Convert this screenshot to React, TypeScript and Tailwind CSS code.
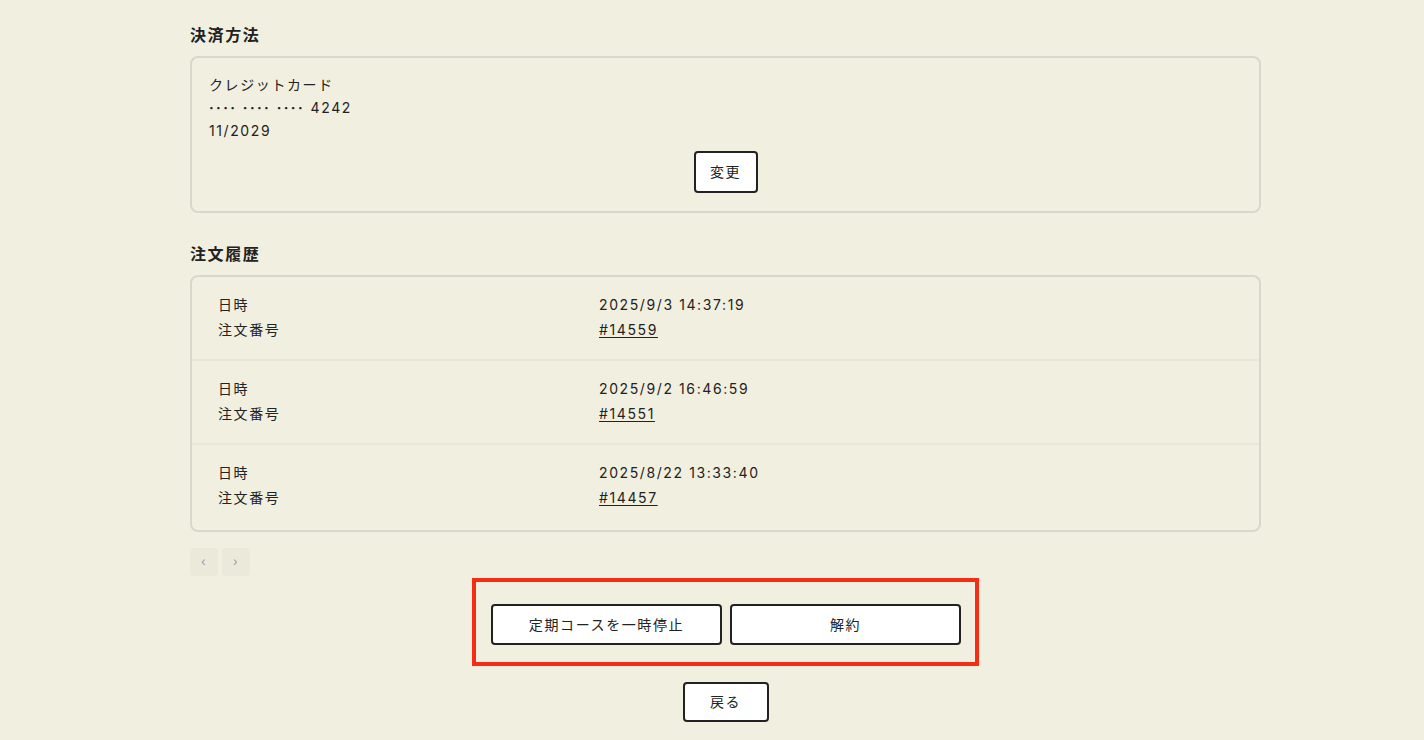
import React from "react";

const orders = [
  { date: "2025/9/3 14:37:19", no: "#14559" },
  { date: "2025/9/2 16:46:59", no: "#14551" },
  { date: "2025/8/22 13:33:40", no: "#14457" },
];

export default function App() {
  return (
    <div
      className="min-h-[740px] w-full bg-[#f1efdf] text-[#222] tracking-[0.1em]"
      style={{ fontFamily: '"Inter", "Noto Sans CJK JP", sans-serif' }}
    >
      <div className="ml-[190px] w-[1071px] pt-[23px] pb-6">
        <h2 className="text-base font-bold leading-6 mb-[9px]">決済方法</h2>
        <div className="rounded-lg border-2 border-[#d9d7cb] px-[17px] pt-[15px] pb-[18px] text-sm leading-[23px]">
          <div>クレジットカード</div>
          <div>
            <span className="tracking-[2.4px] font-bold">····</span>{" "}
            <span className="tracking-[2.4px] font-bold">····</span>{" "}
            <span className="tracking-[2.4px] font-bold">····</span> 4242
          </div>
          <div>11/2029</div>
          <div className="flex justify-center mt-[9px]">
            <button className="h-[42px] w-[64px] rounded border-2 border-[#222] bg-white text-sm">
              変更
            </button>
          </div>
        </div>

        <h2 className="text-base font-bold leading-6 mt-[29px] mb-[9px]">注文履歴</h2>
        <div className="rounded-lg border-2 border-[#d9d7cb] text-sm">
          {orders.map((o, i) => (
            <div
              key={o.no}
              className={`px-[26px] pt-[16px] grid grid-cols-[381px_1fr] content-start gap-y-px leading-[24px] ${
                i < orders.length - 1 ? "h-[84px] border-b-2 border-[#e9e7d8]" : "h-[85px]"
              }`}
            >
              <div>日時</div>
              <div>{o.date}</div>
              <div>注文番号</div>
              <div>
                <span className="underline underline-offset-2">{o.no}</span>
              </div>
            </div>
          ))}
        </div>

        <div className="mt-[16px] flex gap-1">
          <button className="h-7 w-7 rounded bg-[#ebe9d9] text-[#999] text-xs flex items-center justify-center">
            ‹
          </button>
          <button className="h-7 w-7 rounded bg-[#ebe9d9] text-[#999] text-xs flex items-center justify-center">
            ›
          </button>
        </div>

        <div className="flex justify-center mt-[2px]">
          <div className="border-4 border-[#f42d14] pl-[15px] pr-[14px] pt-[22px] pb-[17px] flex gap-2">
            <button className="h-[41px] w-[231px] rounded border-2 border-[#222] bg-white text-sm">
              定期コースを一時停止
            </button>
            <button className="h-[41px] w-[231px] rounded border-2 border-[#222] bg-white text-sm">
              解約
            </button>
          </div>
        </div>

        <div className="flex justify-center mt-4">
          <button className="h-10 w-[86px] rounded border-2 border-[#222] bg-white text-sm">
            戻る
          </button>
        </div>
      </div>
    </div>
  );
}
